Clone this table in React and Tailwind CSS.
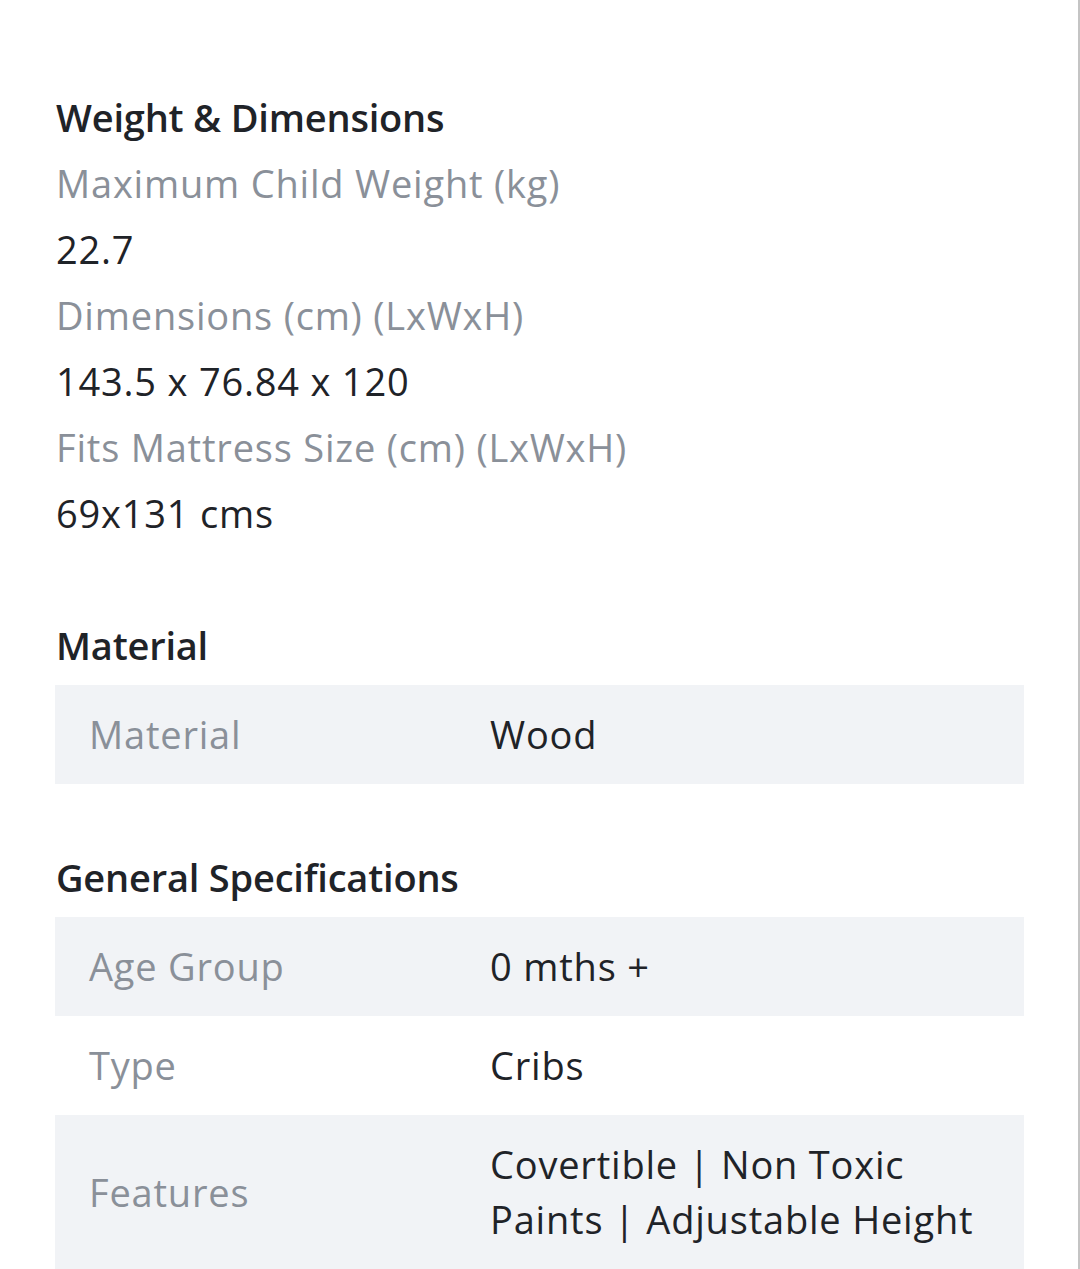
import React from "react";

const font = { fontFamily: '"Open Sans", "Noto Sans", sans-serif' };

const weightRows = [
    { label: "Maximum Child Weight (kg)", value: "22.7" },
    { label: "Dimensions (cm) (LxWxH)", value: "143.5 x 76.84 x 120" },
    { label: "Fits Mattress Size (cm) (LxWxH)", value: "69x131 cms" },
];

const generalRows = [
    { label: "Age Group", value: "0 mths +" },
    { label: "Type", value: "Cribs" },
    { label: "Features", value: "Covertible | Non Toxic Paints | Adjustable Height" },
];

const SpecTable = ({ rows }) => (
    <div className="w-full">
        {rows.map((row, i) => (
            <div
                key={row.label}
                className={`flex items-center min-h-[98px] py-[22px] ${i % 2 === 0 ? "bg-[#f1f3f6]" : "bg-white"}`}
            >
                <div className="w-[435px] shrink-0 pl-[34px] text-[#8a9099] text-[38px] tracking-[0.8px] leading-[55px]">
                    {row.label}
                </div>
                <div className="flex-1 pr-[34px] text-[#1f2328] text-[38px] tracking-[0.8px] leading-[55px]">
                    {row.value}
                </div>
            </div>
        ))}
    </div>
);

export default function App() {
    return (
        <div className="min-h-[1269px] bg-white border-r-[2px] border-[#c4c4c4]" style={font}>
            <div className="pl-[55px] pr-[54px] pt-[84px]">
                {/* Weight & Dimensions */}
                <h2 className="h-[66px] flex items-center pl-[1px] text-[38px] tracking-[-0.2px] font-semibold text-[#1f2328]">
                    Weight &amp; Dimensions
                </h2>
                {weightRows.map((row) => (
                    <div key={row.label} className="pl-[1px]">
                        <p className="h-[66px] flex items-center text-[38px] tracking-[0.8px] text-[#8a9099]">{row.label}</p>
                        <p className="h-[66px] flex items-center text-[38px] tracking-[0.8px] text-[#1f2328]">{row.value}</p>
                    </div>
                ))}

                {/* Material */}
                <h2 className="mt-[66px] mb-[7px] h-[66px] flex items-center pl-[1px] text-[38px] tracking-[-0.2px] font-semibold text-[#1f2328]">
                    Material
                </h2>
                <SpecTable rows={[{ label: "Material", value: "Wood" }]} />

                {/* General Specifications */}
                <h2 className="mt-[60px] mb-[7px] h-[66px] flex items-center pl-[1px] text-[38px] tracking-[-0.2px] font-semibold text-[#1f2328]">
                    General Specifications
                </h2>
                <SpecTable rows={generalRows} />
            </div>
        </div>
    );
}
